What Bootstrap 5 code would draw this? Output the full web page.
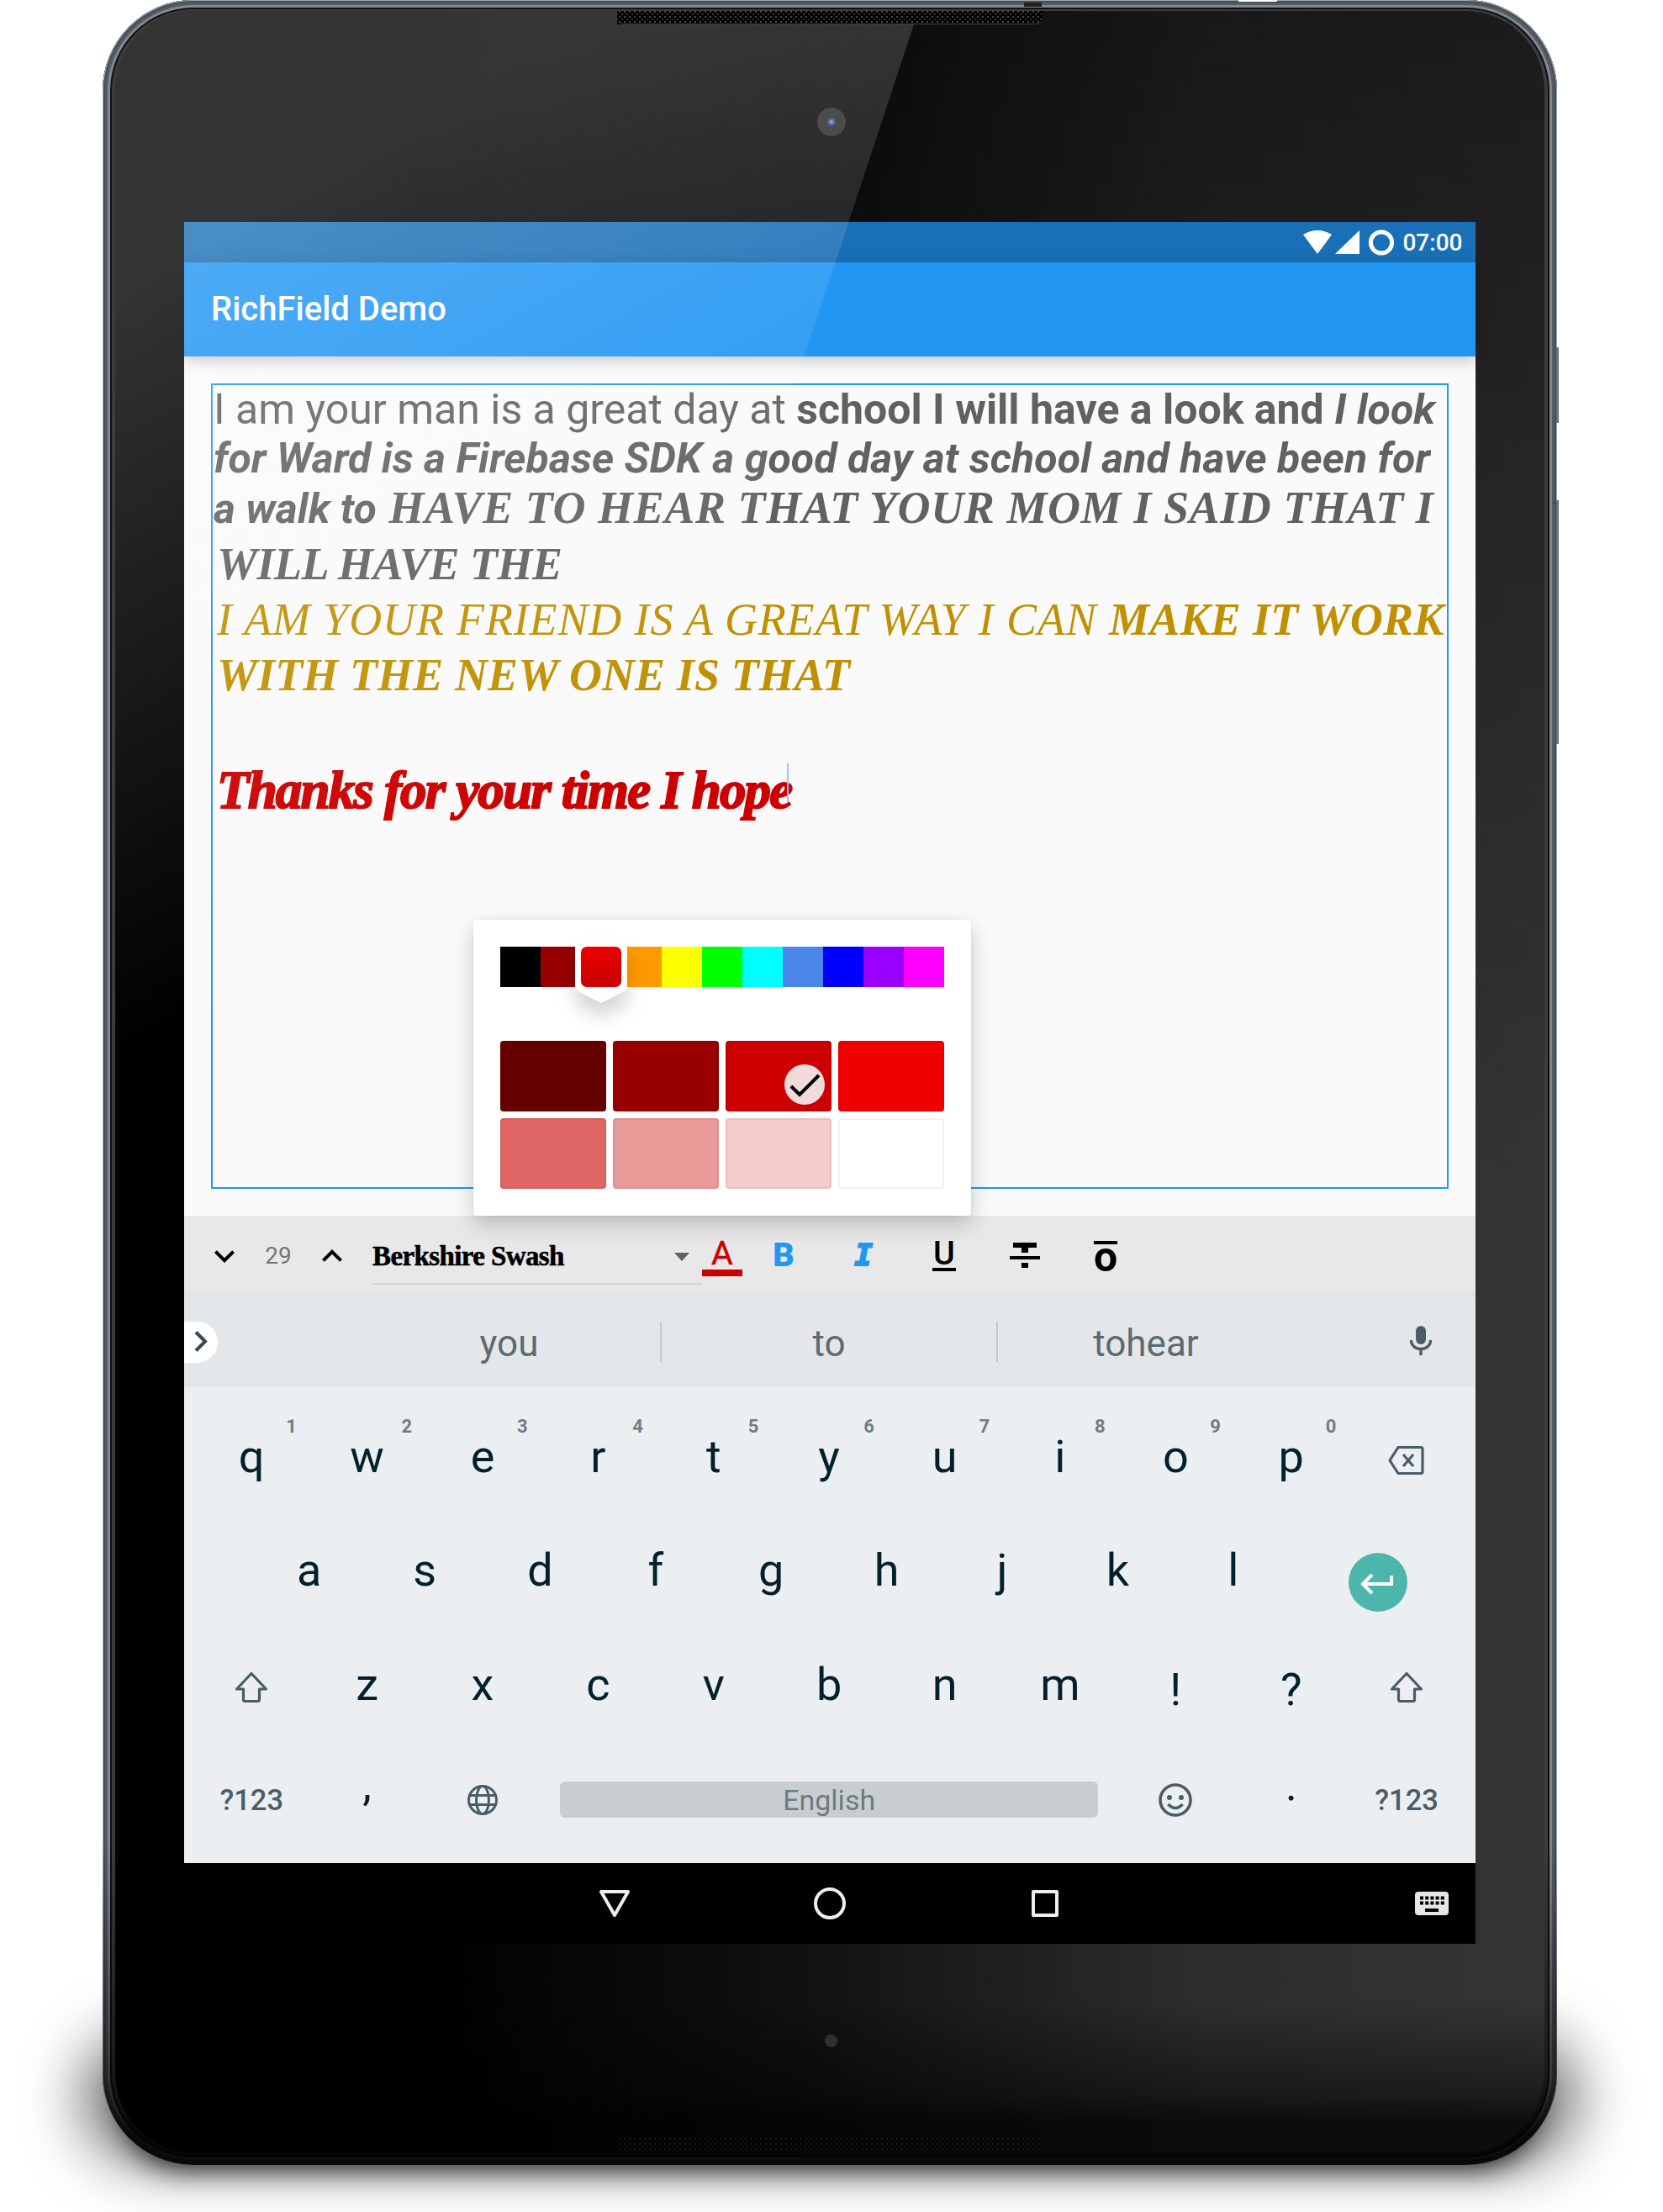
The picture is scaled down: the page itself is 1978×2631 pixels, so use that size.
<!DOCTYPE html>
<html lang="en">
<head>
<meta charset="utf-8">
<title>RichField Demo</title>
<link rel="stylesheet" href="https://cdn.jsdelivr.net/npm/bootstrap@5.3.0/dist/css/bootstrap.min.css">
<style>
body{background:#fff;font-family:Roboto,sans-serif;width:1978px;height:2631px;overflow:hidden;line-height:1}
svg{display:block;flex:none;overflow:visible}
/* device body */
.stage{padding-left:122px;width:1978px;height:2631px;isolation:isolate;overflow:hidden}
.tablet{width:1730px;height:2575px;padding:13px 15px 15px;border-radius:108px;background:#3c3c3c;
 box-shadow:inset 0 0 0 1px #a5aaae,inset 0 0 0 3px #484d54,inset 0 0 0 6px #555b63,inset 0 0 0 9px #83888f,inset 0 0 0 11px #101112}
.tablet::before{content:"";position:absolute;inset:0;border-radius:108px;background:linear-gradient(transparent 85%,rgba(0,0,0,.6) 96%,rgba(0,0,0,.9) 98.6%)}
.glow{position:absolute;z-index:-1}
.glow-a{left:28px;right:28px;top:2440px;height:138px;border-radius:90px;background:rgba(0,0,0,.88);filter:blur(17px)}
.glow-b{left:-24px;right:-24px;top:2420px;height:150px;border-radius:90px;background:rgba(0,0,0,.58);filter:blur(36px)}
.bezel{height:2547px;border-radius:94px;overflow:hidden;padding:251px 81px 0 82px;
 background:linear-gradient(transparent 93%,rgba(0,0,0,.45) 97.3%,rgba(0,0,0,.75) 98.6%),linear-gradient(rgba(0,0,0,.48),transparent 55%),linear-gradient(90deg,#000 0,#000 22%,#111 48%,#2d2d2d 76%,#343434 100%)}
.mesh{position:absolute;left:597px;width:506px;height:16px;border-radius:0 0 8px 8px;background:radial-gradient(circle,#4a4a4a 1px,transparent 1.6px) 0 4px/6px 6px,radial-gradient(circle,#333 1px,transparent 1.6px) 3px 7px/6px 6px,#000}
.mesh-top{top:0;border-bottom:1px solid #444}
.mesh-low{top:2530px;opacity:.3}
.cam{position:absolute;left:835px;top:115px;width:34px;height:34px;background:radial-gradient(circle,#6f9be0 0 1.5px,#3b4f96 2.5px 4px,#2e2e2e 5.5px)}
.sensor{position:absolute;left:844px;top:2407px;width:15px;height:15px;background:#303030}
.side-key{position:absolute;left:1729px;width:3px;background:#6c717a}
.jack{position:absolute;left:1096px;top:3px;width:21px;height:5px;background:#222}
.slot{position:absolute;left:1351px;top:0;width:46px;height:2px;background:#fff}
.glare{position:absolute;left:0;top:0;pointer-events:none;z-index:5}
/* screen */
.screen{width:1536px;height:2048px;background:#fafafa}
.statusbar{height:48px;background:#1a70b6;color:#fff;padding-right:15.5px;padding-top:1px;font-size:28px;font-weight:500}
.appbar{height:112px;background:#2196f3;color:#fff;padding:0 32px;font-size:40px;font-weight:500;box-shadow:0 4px 18px rgba(0,0,0,.24);z-index:1}
.content-area{height:1022px;padding:32px}
.editor{height:958px;border:2px solid #2196f3;color:#616161;font-size:50px;white-space:nowrap}
.editor>div{margin-left:1px}
.h58{height:58px;line-height:58px}.h62{height:62px;line-height:63px}.h64{height:64px;line-height:67px}
.h66{height:66px}.h67{height:67px;line-height:70px}.h69{height:69px;line-height:72px}.h84{height:84px;line-height:85px}
.wide{letter-spacing:.06px}
.caps{font-family:"Liberation Serif",serif;font-style:italic;font-size:54px;line-height:1;text-transform:uppercase}
.gold{color:#bf9000}
.swash{font-family:"Liberation Serif",serif;font-style:italic;font-weight:700;font-size:63px;line-height:1;letter-spacing:-1.85px;color:#c00;-webkit-text-stroke:2px #c00}
.caret{position:absolute;left:682px;top:6px;width:2px;height:46px;background:#90caf9}
.l3{letter-spacing:.58px;margin-left:2px}.l4{letter-spacing:-.5px}.l5{letter-spacing:.86px}.l6{letter-spacing:.3px}.l7{letter-spacing:.1px}
/* colour popup */
.picker{position:absolute;left:344px;top:830px;width:592px;height:352px;padding:32px;background:#fff;border-radius:4px;box-shadow:0 10px 26px rgba(0,0,0,.2),0 0 4px rgba(0,0,0,.05);z-index:2}
.strip i{width:48px;height:48px}
.thumb{position:absolute;left:121px;top:24px;filter:drop-shadow(0 16px 11px rgba(0,0,0,.17))}
.swatches{display:grid;grid-template-columns:repeat(4,126px);gap:8px;margin-top:64px}
.swatches>div{height:84px;border-radius:4px;border:2px solid rgba(0,0,0,.055);background-clip:border-box}
.tick{position:absolute;right:6px;bottom:6px;width:48px;height:48px;background:#f1dada}
/* toolbar */
.tools{height:96px;background:linear-gradient(#e8e8e8 92%,#dfdfdf)}
.fontbox{width:392px;height:64px;margin-left:24px;margin-top:3px;border-bottom:2px solid #d3d3d3;font:700 33px "Liberation Serif",serif;letter-spacing:-.6px;color:#000;padding-right:15px;-webkit-text-stroke:.6px #000}
.fontbox span{white-space:nowrap}
.tool{width:96px}
/* keyboard */
.suggest{height:108px;background:#e3e7ea;color:#5c6b72;font-size:44px}
.suggest .word{padding-top:3px}
.expander{width:40px;height:49px;border-radius:0 25px 25px 0;background:#fff}
.rule{width:2px;height:48px;background:#c2c8cb}
.keys{height:566px;padding:15px 12px 0 11.5px;background:#ebeff2;color:#04202a;font-size:54px}
.krow{height:135.5px}
.key{width:137.4px;flex:none;line-height:135.5px;text-align:center}
.key sup{position:absolute;left:96px;top:21px;font-size:22px;font-weight:700;line-height:22px;width:40px;color:#6f7d84;text-align:center}
.sym{font-size:34.5px;font-weight:500;color:#4a5d66;padding-top:2.5px}
.enter{width:70px;height:70px;background:#4db6ac}
.space{width:640px;height:43px;border-radius:6px;background:#c8cdd0;color:#6d7a80;font-size:34px}
.navkeys{height:96px;background:#000}
</style>
</head>
<body>
<div class="stage position-relative">
<div class="tablet position-relative">
 <div class="glow glow-b"></div><div class="glow glow-a"></div>
 <div class="side-key" style="top:413px;height:90px"></div><div class="side-key" style="top:595px;height:290px"></div>
 <div class="jack"></div><div class="slot"></div>
 <main class="bezel position-relative">
  <div class="mesh mesh-top"></div><div class="mesh mesh-low"></div>
  <div class="cam rounded-circle"></div><div class="sensor rounded-circle"></div>

  <div class="screen d-flex flex-column position-relative">
   <div class="statusbar d-flex align-items-center justify-content-end">
    <svg width="118" height="48" fill="#fff"><path d="M0 14Q17 4 34 14L17 37Z"/><path d="M67 9V37H38Z"/><circle cx="93" cy="23.500" r="12.6" fill="none" stroke="#fff" stroke-width="5"/></svg>
    <span>07:00</span>
   </div>
   <header class="appbar d-flex align-items-center position-relative">RichField Demo</header>

   <section class="content-area">
    <div class="editor">
     <div class="h58">I am your man is a great day at <b>school I will have a look and <i>I look</i></b></div>
     <div class="h58 wide"><b><i>for Ward is a Firebase SDK a good day at school and have been for</i></b></div>
     <div class="h62"><b><i>a walk to</i> <span class="caps l3">have to hear that your mom I said that I</span></b></div>
     <div class="h69 ps-1"><b class="caps l4">will have the</b></div>
     <div class="h64 gold ps-1"><span class="caps l5">I am your friend is a great way I can </span><b class="caps l6">make it work</b></div>
     <div class="h67 gold ps-1"><b class="caps l7">with the new one is that</b></div>
     <div class="h66"></div>
     <div class="h84 ps-1 position-relative"><span class="swash">Thanks for your time I hope</span><span class="caret"></span></div>
    </div>
   </section>

   <div class="picker">
    <div class="strip d-flex"><i style="background:#000"></i><i style="background:#980000"></i><i style="background:#d00"></i><i style="background:#f90"></i><i style="background:#ff0"></i><i style="background:#0f0"></i><i style="background:#0ff"></i><i style="background:#4a86e8"></i><i style="background:#00f"></i><i style="background:#90f"></i><i style="background:#f0f"></i></div>
    <svg class="thumb" width="62" height="76"><defs><linearGradient id="red" x2="0" y2="1"><stop stop-color="#ee0000"/><stop offset=".8" stop-color="#cc0000"/></linearGradient></defs><path d="M9 0H53Q62 0 62 9V54Q62 59 57 62L31 75L5 62Q0 59 0 54V9Q0 0 9 0Z" fill="#fff"/><rect x="7" y="8" width="48" height="48" rx="7" fill="url(#red)"/></svg>
    <div class="swatches">
     <div style="background:#600"></div><div style="background:#900"></div>
     <div class="position-relative" style="background:#c00"><span class="tick rounded-circle"><svg width="48" height="48" fill="none" stroke="#000" stroke-width="4"><path d="M8 26L18 36L41 13"/></svg></span></div>
     <div style="background:#f10000"></div><div style="background:#e06666"></div><div style="background:#ea9999"></div><div style="background:#f4cccc"></div><div style="background:#fff"></div>
    </div>
   </div>

   <div class="tools d-flex align-items-center">
    <svg class="ms-4" width="48" height="48" viewBox="0 0 24 24"><path d="M16.59 8.59L12 13.17L7.41 8.59L6 10L12 16L18 10Z"/></svg>
    <span class="text-center" style="width:80px;font-size:28px;color:#757575">29</span>
    <svg width="48" height="48" viewBox="0 0 24 24"><path d="M12 8L6 14L7.41 15.41L12 10.83L16.59 15.41L18 14Z"/></svg>
    <div class="fontbox d-flex align-items-center justify-content-between"><span>Berkshire Swash</span><svg width="18" height="10" fill="#616161"><path d="M0 0H18L9 10Z"/></svg></div>
    <svg width="48" height="48"><text x="24" y="34" text-anchor="middle" font-size="39.5" font-weight="400" stroke="#c00" stroke-width=".5" fill="#c00">A</text><rect y="40" width="48" height="8" fill="#c00"/></svg>
    <div class="tool d-flex justify-content-center"><svg width="48" height="48"><text x="25" y="36" text-anchor="middle" font-size="39.5" font-weight="900" fill="#2196f3">B</text></svg></div>
    <div class="tool d-flex justify-content-center"><svg width="48" height="48"><text x="24" y="35" text-anchor="middle" font-family="DejaVu Sans Mono" font-style="italic" font-size="36" font-weight="700" fill="#2196f3" stroke="#2196f3" stroke-width="2">I</text></svg></div>
    <div class="tool d-flex justify-content-center"><svg width="48" height="48"><text x="24" y="34" text-anchor="middle" font-size="39.5" font-weight="500">U</text><rect x="10" y="38" width="28" height="4"/></svg></div>
    <div class="tool d-flex justify-content-center"><svg width="48" height="48"><path d="M10 8H38V14H28V20H20V14H10ZM6 24H42V28H6ZM20 32H28V38H20Z"/></svg></div>
    <div class="tool d-flex justify-content-center"><svg width="48" height="48"><rect x="10" y="6" width="28" height="4"/><text x="24" y="41.5" text-anchor="middle" font-size="50" font-weight="700">o</text></svg></div>
   </div>

   <div class="suggest d-flex align-items-center">
    <div class="expander d-flex align-items-center"><svg width="40" height="48" fill="none" stroke="#37474f" stroke-width="4"><path d="M14 12.500L25 23.500L14 34.500"/></svg></div>
    <span class="word text-center" style="width:359px;margin-left:167px">you</span><span class="rule"></span>
    <span class="word text-center" style="width:398px">to</span><span class="rule"></span>
    <span class="word text-center" style="width:352px">tohear</span>
    <svg style="margin-left:127px" width="48" height="48" viewBox="-24 -24 48 48"><rect x="-6" y="-19" width="12" height="22" rx="6" fill="#4a5d66"/><path d="M-11.5 -2C-11.5 12 11.5 12 11.5 -2M0 8V16" fill="none" stroke="#4a5d66" stroke-width="3.4"/></svg>
   </div>

   <div class="keys">
    <div class="krow d-flex">
     <div class="key position-relative">q<sup>1</sup></div><div class="key position-relative">w<sup>2</sup></div><div class="key position-relative">e<sup>3</sup></div><div class="key position-relative">r<sup>4</sup></div><div class="key position-relative">t<sup>5</sup></div><div class="key position-relative">y<sup>6</sup></div><div class="key position-relative">u<sup>7</sup></div><div class="key position-relative">i<sup>8</sup></div><div class="key position-relative">o<sup>9</sup></div><div class="key position-relative">p<sup>0</sup></div>
     <div class="key d-flex align-items-center justify-content-center" style="padding-top:9px"><svg width="44" height="36" fill="none" stroke="#4a5d66" stroke-width="3.2" stroke-linejoin="round"><path d="M12 2.5H39Q41 2.5 41 4.5V31.5Q41 33.5 39 33.5H12L2 18Z"/><path d="M18 11L30 25M30 11L18 25"/></svg></div>
    </div>
    <div class="krow d-flex" style="padding-left:68.5px;margin-top:-1px;margin-bottom:1px">
     <div class="key">a</div><div class="key">s</div><div class="key">d</div><div class="key">f</div><div class="key">g</div><div class="key">h</div><div class="key">j</div><div class="key">k</div><div class="key">l</div>
     <div class="flex-fill d-flex align-items-center justify-content-center" style="padding-top:30px"><span class="enter rounded-circle"><svg width="70" height="70" fill="none" stroke="#fff" stroke-width="4"><path d="M51 27V37H18M28 26L17 37L28 48"/></svg></span></div>
    </div>
    <div class="krow d-flex">
     <div class="key d-flex align-items-center justify-content-center" style="padding-top:6px"><svg width="40" height="38" fill="none" stroke="#4a5d66" stroke-width="3.2" stroke-linejoin="round"><path d="M20 2.5L2.5 21H10.500V33.500Q10.500 35.500 12.500 35.500H27.500Q29.500 35.500 29.500 33.500V21H37.500Z"/></svg></div>
     <div class="key">z</div><div class="key">x</div><div class="key">c</div><div class="key">v</div><div class="key">b</div><div class="key">n</div><div class="key">m</div><div class="key" style="padding-top:6px">!</div><div class="key" style="padding-top:6px">?</div>
     <div class="key d-flex align-items-center justify-content-center" style="padding-top:6px"><svg width="40" height="38" fill="none" stroke="#4a5d66" stroke-width="3.2" stroke-linejoin="round"><path d="M20 2.5L2.5 21H10.500V33.500Q10.500 35.500 12.500 35.500H27.500Q29.500 35.500 29.500 33.500V21H37.500Z"/></svg></div>
    </div>
    <div class="krow d-flex">
     <div class="key sym">?123</div>
     <div class="key" style="margin-top:-17px">,</div>
     <div class="key d-flex align-items-center justify-content-center pt-1"><svg width="38" height="38" fill="none" stroke="#4a5d66" stroke-width="3"><circle cx="19" cy="19" r="16.500"/><ellipse cx="19" cy="19" rx="7.500" ry="16.500"/><path d="M4 13.500H34M4 24.500H34"/></svg></div>
     <div class="d-flex align-items-center justify-content-center" style="width:687px;padding-top:3px"><div class="space d-flex align-items-center justify-content-center">English</div></div>
     <div class="key d-flex align-items-center justify-content-center pt-1"><svg width="42" height="42" fill="none" stroke="#4a5d66" stroke-width="3.600"><circle cx="21" cy="21" r="18"/><circle cx="14" cy="18" r="3" fill="#4a5d66" stroke="none"/><circle cx="28" cy="18" r="3" fill="#4a5d66" stroke="none"/><path d="M12.500 26Q21 35 29.500 26"/></svg></div>
     <div class="key" style="margin-top:-17px">.</div>
     <div class="key sym">?123</div>
    </div>
   </div>

   <div class="navkeys position-relative d-flex align-items-center justify-content-center">
    <svg width="1536" height="96" fill="none" stroke="#eee" stroke-width="4" stroke-linejoin="round"><path d="M496 34H528L512 62Z"/><circle cx="768" cy="48" r="17"/><rect x="1010" y="34" width="28" height="28"/><rect x="1464" y="34" width="40" height="28" rx="4" fill="#e6e6e6" stroke="none"/><path d="M1470 41.500H1500M1470 47.500H1500" stroke="#000" stroke-dasharray="4 2.200"/><path d="M1476 56H1492" stroke="#000"/></svg>
   </div>
  </div>

  <svg class="glare" width="1700" height="1540"><defs><linearGradient id="shine" gradientUnits="userSpaceOnUse" x1="19" y1="309" x2="412" y2="1028"><stop stop-color="#fff" stop-opacity=".205"/><stop offset="1" stop-color="#fff" stop-opacity="0"/></linearGradient></defs><path d="M0 0H597V16H950L460 1500H0Z" fill="url(#shine)"/></svg>
 </main>
</div>
</div>
<script src="https://cdn.jsdelivr.net/npm/bootstrap@5.3.0/dist/js/bootstrap.bundle.min.js"></script>
</body>
</html>
